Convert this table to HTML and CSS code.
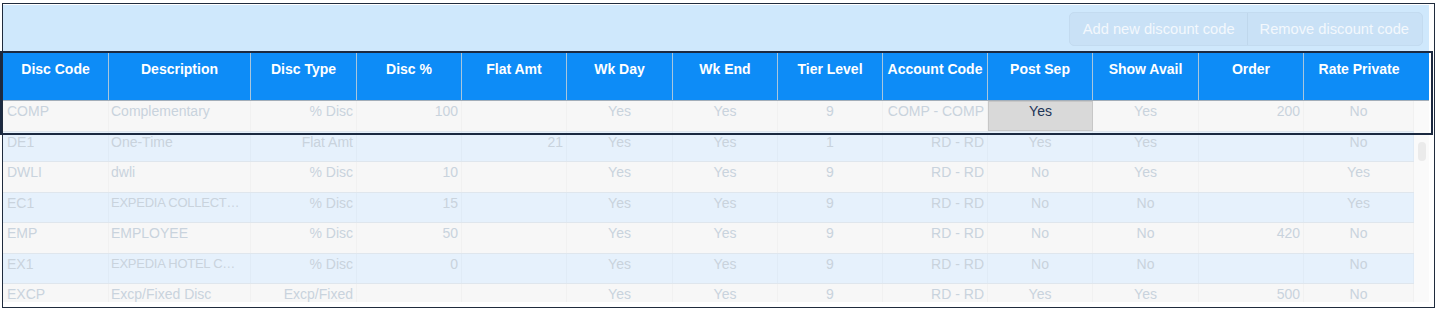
FILE: index.html
```html
<!DOCTYPE html>
<html>
<head>
<meta charset="utf-8">
<link rel="stylesheet" href="styles.css">
</head>
<body>
<div class="frame">
  <div class="panel">
    <div class="toolbar">
      <div class="btn-group">
        <button class="btn">Add new discount code</button>
        <button class="btn">Remove discount code</button>
      </div>
    </div>
    <div class="grid">
      <div class="head">
        <div class="hcell">Disc Code</div>
        <div class="hcell">Description</div>
        <div class="hcell">Disc Type</div>
        <div class="hcell">Disc %</div>
        <div class="hcell">Flat Amt</div>
        <div class="hcell">Wk Day</div>
        <div class="hcell">Wk End</div>
        <div class="hcell">Tier Level</div>
        <div class="hcell">Account Code</div>
        <div class="hcell">Post Sep</div>
        <div class="hcell">Show Avail</div>
        <div class="hcell">Order</div>
        <div class="hcell last">Rate Private</div>
        <div class="hspacer"></div>
      </div>
      <div class="bodyarea">
        <div class="rows">
          <div class="row odd">
            <div class="c l">COMP</div><div class="c d">Complementary</div><div class="c r">% Disc</div><div class="c r">100</div><div class="c r"></div><div class="c m">Yes</div><div class="c m">Yes</div><div class="c m">9</div><div class="c r">COMP - COMP</div><div class="c m sel">Yes</div><div class="c m">Yes</div><div class="c r">200</div><div class="c m">No</div>
          </div>
          <div class="row even">
            <div class="c l">DE1</div><div class="c d">One-Time</div><div class="c r">Flat Amt</div><div class="c r"></div><div class="c r">21</div><div class="c m">Yes</div><div class="c m">Yes</div><div class="c m">1</div><div class="c r">RD - RD</div><div class="c m">Yes</div><div class="c m">Yes</div><div class="c r"></div><div class="c m">No</div>
          </div>
          <div class="row odd">
            <div class="c l">DWLI</div><div class="c d">dwli</div><div class="c r">% Disc</div><div class="c r">10</div><div class="c r"></div><div class="c m">Yes</div><div class="c m">Yes</div><div class="c m">9</div><div class="c r">RD - RD</div><div class="c m">No</div><div class="c m">Yes</div><div class="c r"></div><div class="c m">Yes</div>
          </div>
          <div class="row even">
            <div class="c l">EC1</div><div class="c d tight">EXPEDIA COLLECT…</div><div class="c r">% Disc</div><div class="c r">15</div><div class="c r"></div><div class="c m">Yes</div><div class="c m">Yes</div><div class="c m">9</div><div class="c r">RD - RD</div><div class="c m">No</div><div class="c m">No</div><div class="c r"></div><div class="c m">Yes</div>
          </div>
          <div class="row odd">
            <div class="c l">EMP</div><div class="c d">EMPLOYEE</div><div class="c r">% Disc</div><div class="c r">50</div><div class="c r"></div><div class="c m">Yes</div><div class="c m">Yes</div><div class="c m">9</div><div class="c r">RD - RD</div><div class="c m">No</div><div class="c m">No</div><div class="c r">420</div><div class="c m">No</div>
          </div>
          <div class="row even">
            <div class="c l">EX1</div><div class="c d tight">EXPEDIA HOTEL C…</div><div class="c r">% Disc</div><div class="c r">0</div><div class="c r"></div><div class="c m">Yes</div><div class="c m">Yes</div><div class="c m">9</div><div class="c r">RD - RD</div><div class="c m">No</div><div class="c m">No</div><div class="c r"></div><div class="c m">No</div>
          </div>
          <div class="row odd">
            <div class="c l">EXCP</div><div class="c d">Excp/Fixed Disc</div><div class="c r">Excp/Fixed</div><div class="c r"></div><div class="c r"></div><div class="c m">Yes</div><div class="c m">Yes</div><div class="c m">9</div><div class="c r">RD - RD</div><div class="c m">Yes</div><div class="c m">Yes</div><div class="c r">500</div><div class="c m">No</div>
          </div>
        </div>
        <div class="scrollbar"><div class="thumb"></div></div>
      </div>
    </div>
  </div>
  <div class="selection"></div>
</div>
</body>
</html>
```
FILE: styles.css
```css
* { box-sizing: border-box; }

html, body {
  margin: 0;
  padding: 0;
  background: #ffffff;
  font-family: "Liberation Sans", Arial, Helvetica, sans-serif;
}

.frame {
  position: relative;
  margin: 3px 0 0 2px;
  width: 1433px;
  height: 305px;
  border: 1px solid #1f2b3d;
  padding: 1px 5px 0 0;
  background: #ffffff;
}

.panel {
  width: 1426px;
  height: 297px;
  overflow: hidden;
}

.toolbar {
  height: 46px;
  background: #cfe8fc;
  display: flex;
  justify-content: flex-end;
  align-items: flex-start;
  padding: 7px 6px 0 0;
}

.btn-group {
  display: flex;
  height: 34px;
  border: 1px solid #c3dbf0;
  border-radius: 5px;
  background: #c9e1f6;
  overflow: hidden;
}

.btn {
  font-family: "Liberation Sans", Arial, Helvetica, sans-serif;
  font-size: 14.7px;
  color: #f3f8fd;
  background: transparent;
  border: 0;
  padding: 0 12px 0 13px;
  height: 32px;
  line-height: 32px;
  margin: 0;
  white-space: nowrap;
}

.btn + .btn {
  border-left: 1px solid #bfd7ec;
  padding: 0 13px 0 12px;
}

.grid {
  display: flex;
  flex-direction: column;
}

.head {
  display: grid;
  grid-template-columns: 106px 142px 106px 105px 105px 106px 105px 105px 105px 105px 106px 105px 110px 15px;
  height: 50px;
  background: #0d8cf7;
  border-top: 1px solid #a9bccc;
  border-bottom: 1px solid #a3aeb9;
}

.hcell {
  color: #ffffff;
  font-weight: bold;
  font-size: 14px;
  line-height: 16px;
  text-align: center;
  padding-top: 9px;
  border-right: 1px solid #a8c6dd;
  white-space: nowrap;
  overflow: hidden;
}

.hcell.last { border-right: 0; }

.bodyarea {
  display: flex;
  height: 201px;
  overflow: hidden;
}

.rows {
  width: 1411px;
  display: flex;
  flex-direction: column;
}

.row {
  display: grid;
  grid-template-columns: 106px 142px 106px 105px 105px 106px 105px 105px 105px 105px 106px 105px 110px;
  height: 30.5px;
  flex: 0 0 30.5px;
  border-bottom: 1px solid #dfe6ed;
}

.row.odd { background: #f7f7f7; }
.row.even { background: #e6f1fc; }

.c {
  font-size: 14px;
  line-height: 16px;
  padding: 2px 3px 0 3px;
  color: #c9d3dd;
  white-space: nowrap;
  overflow: hidden;
  border-right: 1px solid rgba(0, 0, 0, 0.025);
}

.c.l { text-align: left; padding-left: 4px; }
.c.d { text-align: left; padding-left: 2px; padding-right: 0; }
.c.tight { font-size: 13px; letter-spacing: -0.25px; }
.c.r { text-align: right; }
.c.m { text-align: center; }

.c.sel {
  background: #d9d9d9;
  border: 1px solid #c7c7c7;
  color: #1d3557;
  padding-top: 1px;
}

.scrollbar {
  width: 15px;
  background: #fafafa;
  padding: 41px 0 0 4px;
}

.thumb {
  width: 8px;
  height: 19px;
  border-radius: 4px;
  background: #ebebeb;
}

.selection {
  position: absolute;
  left: -3px;
  top: 47px;
  width: 1433px;
  height: 84px;
  border: 2px solid #1b2940;
  pointer-events: none;
}
```
